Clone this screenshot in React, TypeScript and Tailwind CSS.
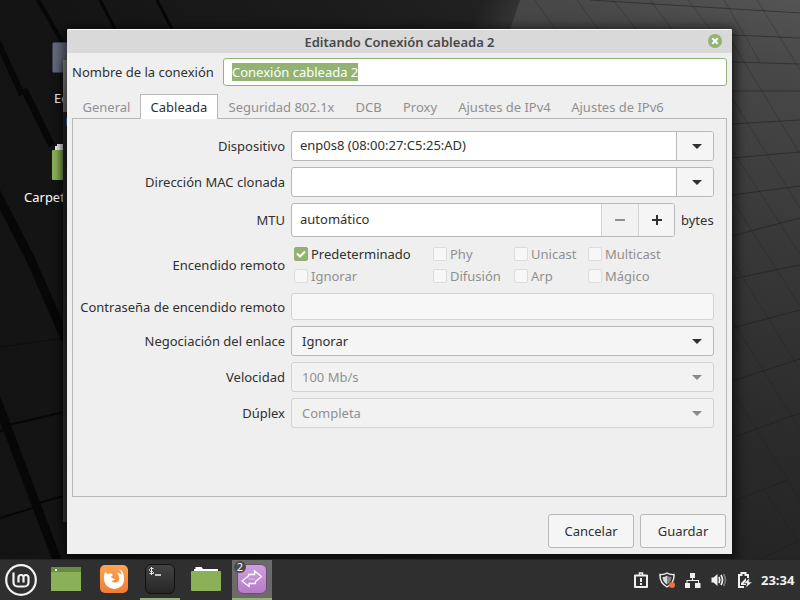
import React from "react";

const TABS = [
  { name: "General", width: "min-w-[67px]" },
  { name: "Cableada", width: "min-w-[78px]" },
  { name: "Seguridad 802.1x", width: "min-w-[127px]" },
  { name: "DCB", width: "min-w-[47px]" },
  { name: "Proxy", width: "min-w-[56px]" },
  { name: "Ajustes de IPv4", width: "min-w-[113px]" },
  { name: "Ajustes de IPv6", width: "min-w-[113px]" },
];

const WAKE = [
  { name: "Predeterminado", on: true },
  { name: "Phy", on: false },
  { name: "Unicast", on: false },
  { name: "Multicast", on: false },
  { name: "Ignorar", on: false },
  { name: "Difusión", on: false },
  { name: "Arp", on: false },
  { name: "Mágico", on: false },
];

function Wallpaper() {
  return (
    <svg className="absolute inset-0 h-full w-full" viewBox="0 0 800 600" preserveAspectRatio="xMidYMid slice" aria-hidden="true">
      <defs>
        <linearGradient id="base" x1="0" y1="0" x2="1" y2="0">
          <stop offset="0" stopColor="#131313" />
          <stop offset="0.3" stopColor="#191919" />
          <stop offset="0.58" stopColor="#202020" />
          <stop offset="1" stopColor="#2a2a2a" />
        </linearGradient>
        <linearGradient id="shine" gradientUnits="userSpaceOnUse" x1="800" y1="0" x2="640" y2="560">
          <stop offset="0" stopColor="#545454" />
          <stop offset="0.12" stopColor="#484848" />
          <stop offset="0.4" stopColor="#393939" />
          <stop offset="0.75" stopColor="#2a2a2a" />
          <stop offset="1" stopColor="#232323" />
        </linearGradient>
        <linearGradient id="edge" gradientUnits="userSpaceOnUse" x1="478" y1="10" x2="506" y2="26">
          <stop offset="0" stopColor="#333333" stopOpacity="0" />
          <stop offset="1" stopColor="#333333" />
        </linearGradient>
      </defs>
      <rect width="800" height="600" fill="url(#base)" />
      <path d="M470 0H560V30H470Z" fill="url(#edge)" />
      <path d="M520 0H800V600H600L510 30Z" fill="url(#shine)" />
      <g stroke="#070707" fill="none">
        <path d="M-2 42L22 95" strokeWidth="6" />
        <path d="M24 89L52 146" strokeWidth="7" />
        <path d="M38 0L68 52" strokeWidth="4" />
        <path d="M100 0L115 29M157 0L172 29" strokeWidth="3" />
        <path d="M-4 192L30 258L66 340" strokeWidth="9" />
        <path d="M-4 398L57 560" strokeWidth="9" />
        <path d="M0 432L8 425L64 412M0 518L36 507M38 503L64 496" strokeWidth="2" />
        <path d="M0 347L64 338" strokeOpacity="0.5" />
      </g>
      <g stroke="#1c1c1c" strokeOpacity="0.5" fill="none">
        <path d="M590 0L800 13M732 35L800 38M732 62L800 64M732 91L800 91M732 124L800 120M732 158L800 152M732 195L800 186M732 236L800 218M732 279L800 265M732 328L800 310M732 381L800 359M732 438L800 413M732 502L787 480M763 558L800 540" />
      </g>
      <g stroke="#1c1c1c" strokeOpacity="0.28" fill="none">
        <path d="M535 0L555 29M577 0L598 29M613 0L636 29M650 0L672 29M688 0L710 29M724 0L760 62M757 0L800 70M732 42L800 154M732 98L800 208M732 150L800 254M732 200L800 306M732 260L800 370M732 320L800 430M732 390L800 500M763 488L797 540" />
      </g>
    </svg>
  );
}

function Arrow({ className }: { className: string }) {
  return (
    <svg className={className} width="10" height="5" viewBox="0 0 10 5" fill="currentColor" aria-hidden="true">
      <path d="M0 0H10L5 5Z" />
    </svg>
  );
}

function Label({ htmlFor, children }: { htmlFor: string; children: React.ReactNode }) {
  return (
    <label htmlFor={htmlFor} className="flex justify-end whitespace-nowrap">
      {children}
    </label>
  );
}

function ComboEntry({ id, value }: { id: string; value: string }) {
  return (
    <div className="flex h-[30px] overflow-hidden rounded-[3px] border border-[#b8b8b8] bg-white">
      <input id={id} defaultValue={value} className="min-w-0 flex-1 px-2 pb-0.5 outline-none" />
      <button type="button" aria-label="Abrir lista" className="flex w-[37px] items-center justify-center border-l border-[#b8b8b8] bg-[#f5f5f5] pl-1">
        <Arrow className="text-[#303030]" />
      </button>
    </div>
  );
}

function Dropdown({ id, value, disabled = false }: { id: string; value: string; disabled?: boolean }) {
  return (
    <div className="relative h-[30px]">
      <select
        id={id}
        disabled={disabled}
        defaultValue={value}
        className="h-full w-full appearance-none rounded-[3px] border border-[#b8b8b8] bg-[#f5f5f5] px-2.5 opacity-100 outline-none disabled:border-[#d3d3d3] disabled:bg-[#f2f2f2] disabled:text-[#909090]"
      >
        <option>{value}</option>
      </select>
      <Arrow className={disabled ? "pointer-events-none absolute top-[13px] right-3 text-[#8a8a8a]" : "pointer-events-none absolute top-[13px] right-3 text-[#303030]"} />
    </div>
  );
}

function Check({ name, on }: { name: string; on: boolean }) {
  return (
    <label className={on ? "flex h-[22px] items-center gap-[3px]" : "flex h-[22px] items-center gap-[3px] text-[#909090]"}>
      <span className="relative flex h-3.5 w-3.5">
        <input
          type="checkbox"
          defaultChecked={on}
          disabled={!on}
          className="h-3.5 w-3.5 appearance-none rounded-[2px] border border-[#dcdcdc] bg-[#f7f7f7] checked:border-[#8fb070] checked:bg-[#92b372]"
        />
        {on && (
          <svg className="pointer-events-none absolute inset-0" width="14" height="14" viewBox="0 0 14 14" fill="none" stroke="#fff" strokeWidth="2" aria-hidden="true">
            <path d="M3 6.5L6 9.5L11 4.5" />
          </svg>
        )}
      </span>
      {name}
    </label>
  );
}

function Dialog() {
  return (
    <section className="relative flex flex-1 flex-col overflow-hidden rounded-t-[2px] bg-[#efefef] shadow-[0_3px_12px_4px_rgba(0,0,0,0.6)]">
      <header className="relative flex h-6 shrink-0 items-center justify-center border-t border-white bg-[#d9d9d9]">
        <h1 className="text-[13px] leading-5 font-semibold text-[#484848]">Editando Conexión cableada 2</h1>
        <button type="button" aria-label="Cerrar" className="absolute top-1 right-2.5 h-3.5 w-3.5 rounded-full bg-[#92b372]">
          <svg width="14" height="14" viewBox="0 0 14 14" stroke="#fff" strokeWidth="2" aria-hidden="true">
            <path d="M4.3 4.3L9.7 9.7M9.7 4.3L4.3 9.7" />
          </svg>
        </button>
      </header>

      <form className="flex flex-1 flex-col px-[5px] pt-[5px] pb-1.5" onSubmit={(e) => e.preventDefault()}>
        <div className="flex items-center">
          <label htmlFor="nombre" className="w-[151px] whitespace-nowrap">
            Nombre de la conexión
          </label>
          <div className="relative h-7 min-w-0 flex-1">
            <input
              id="nombre"
              autoFocus
              defaultValue="Conexión cableada 2"
              onFocus={(e) => e.currentTarget.select()}
              className="h-full w-full rounded-[3px] border border-[#92b372] bg-white px-2 outline-none selection:bg-[#92b372] selection:text-white"
            />
          </div>
        </div>

        <div role="tablist" className="mt-2 flex h-6 pl-px">
          {TABS.map((tab) => (
            <button
              key={tab.name}
              type="button"
              role="tab"
              aria-selected={tab.name === "Cableada"}
              className={`${tab.width} relative -mb-px border border-b-0 border-transparent text-center whitespace-nowrap text-[#909090] aria-selected:z-10 aria-selected:border-[#b8b8b8] aria-selected:bg-white aria-selected:text-[#303030]`}
            >
              {tab.name}
            </button>
          ))}
        </div>

        <div role="tabpanel" className="flex-1 border border-[#b8b8b8] p-3">
          <div className="grid grid-cols-[200px_minmax(0,1fr)] items-center gap-1.5">
            <Label htmlFor="dispositivo">Dispositivo</Label>
            <ComboEntry id="dispositivo" value="enp0s8 (08:00:27:C5:25:AD)" />

            <Label htmlFor="mac">Dirección MAC clonada</Label>
            <ComboEntry id="mac" value="" />

            <Label htmlFor="mtu">MTU</Label>
            <div className="flex items-center gap-1.5">
              <div className="flex h-[34px] min-w-0 flex-1 overflow-hidden rounded-[3px] border border-[#b8b8b8] bg-white">
                <input id="mtu" defaultValue="automático" className="min-w-0 flex-1 px-2 pb-0.5 outline-none" />
                <button type="button" disabled aria-label="Reducir" className="flex w-[37px] items-center justify-center border-l border-[#d3d3d3] bg-[#f2f2f2]">
                  <span className="h-0.5 w-2.5 bg-[#909090]" />
                </button>
                <button type="button" aria-label="Aumentar" className="flex w-9 items-center justify-center border-l border-[#d3d3d3] bg-[#f5f5f5]">
                  <svg width="10" height="10" viewBox="0 0 10 10" stroke="#303030" strokeWidth="2" aria-hidden="true">
                    <path d="M5 0V10M0 5H10" />
                  </svg>
                </button>
              </div>
              <span className="w-[33px] whitespace-nowrap">bytes</span>
            </div>

            <span id="encendido" className="text-right">Encendido remoto</span>
            <div role="group" aria-labelledby="encendido" className="grid grid-cols-[139px_81px_74px_1fr] pl-[3px]">
              {WAKE.map((option) => (
                <Check key={option.name} name={option.name} on={option.on} />
              ))}
            </div>

            <Label htmlFor="clave">Contraseña de encendido remoto</Label>
            <input id="clave" type="password" disabled className="h-[27px] rounded-[3px] border border-[#d3d3d3] bg-[#f7f7f7] px-2" />

            <Label htmlFor="negociacion">Negociación del enlace</Label>
            <Dropdown id="negociacion" value="Ignorar" />

            <Label htmlFor="velocidad">Velocidad</Label>
            <Dropdown id="velocidad" value="100 Mb/s" disabled />

            <Label htmlFor="duplex">Dúplex</Label>
            <Dropdown id="duplex" value="Completa" disabled />
          </div>
        </div>

        <div className="mt-[17px] flex justify-end gap-1.5 pr-px">
          <button type="button" className="h-[34px] w-[86px] rounded-[3px] border border-[#b8b8b8] bg-[#f5f5f5]">Cancelar</button>
          <button type="submit" className="h-[34px] w-[86px] rounded-[3px] border border-[#b8b8b8] bg-[#f5f5f5]">Guardar</button>
        </div>
      </form>
    </section>
  );
}

function TaskButton({ label, state = "idle", children }: { label: string; state?: "idle" | "open" | "active"; children: React.ReactNode }) {
  const look = {
    idle: "border-transparent",
    open: "border-[#92b372]",
    active: "border-[#92b372] bg-[#6b6b6b]",
  }[state];
  return (
    <button type="button" aria-label={label} className={`${look} relative flex w-10 items-center justify-center border-b-2`}>
      {children}
    </button>
  );
}

function Taskbar() {
  return (
    <footer className="relative flex h-[41px] shrink-0 items-stretch border-t border-[#232323] bg-[#2f2f2f] pr-1">
      <button type="button" aria-label="Menú" className="ml-[5px] flex w-8 items-center">
        <svg width="32" height="32" viewBox="0 0 32 32" fill="none" stroke="#f2f2f2" aria-hidden="true">
          <circle cx="16" cy="16" r="14.8" strokeWidth="2.2" />
          <path d="M8.500 8.500V18.500A4 4 0 0 0 12.500 22.500H19.500A4 4 0 0 0 23.500 18.500V13.500A2.500 2.500 0 0 0 18.500 13.500V18.500M18.500 13.500A2.500 2.500 0 0 0 13.500 13.500V18.500" strokeWidth="2.2" />
        </svg>
      </button>
      <div className="ml-[9px] flex gap-1.5">
        <TaskButton label="Mostrar escritorio">
          <svg width="30" height="24" viewBox="0 0 30 24" aria-hidden="true">
            <path d="M0 0H30V24H0Z" fill="#8bb158" />
            <path d="M0 0H30V5H0Z" fill="#688b42" />
            <path d="M4 2H6V4H4Z" fill="#fff" />
          </svg>
        </TaskButton>
        <span className="-mx-[3px] w-0.5" />
        <TaskButton label="Firefox">
          <svg width="28" height="28" viewBox="0 0 28 28" aria-hidden="true">
            <defs>
              <linearGradient id="fox" x1="0" y1="0" x2="0" y2="1">
                <stop offset="0" stopColor="#ffa552" />
                <stop offset="1" stopColor="#f27b35" />
              </linearGradient>
            </defs>
            <rect width="28" height="28" rx="5" fill="url(#fox)" />
            <path d="M5 7L8 9Q10 7.5 12 9L13 10L11 11.5L12 13L15 14Q14 16 11.5 16Q13 18 16 17.5Q20 16.500 19 12Q18.500 9 16.500 7.500Q20 7.500 21.500 10Q21.500 6.500 19 4Q23.500 6 24 12Q25 20 18.500 23Q12 25.500 7 21Q3.500 17.500 4 11Q4.200 8.500 5 7Z" fill="#fff" />
          </svg>
        </TaskButton>
        <TaskButton label="Terminal" state="open">
          <svg width="30" height="30" viewBox="0 0 30 30" aria-hidden="true">
            <defs>
              <linearGradient id="term" x1="0" y1="0" x2="0" y2="1">
                <stop offset="0" stopColor="#444" />
                <stop offset="1" stopColor="#262626" />
              </linearGradient>
            </defs>
            <rect x="0.5" y="0.5" width="29" height="29" rx="5.5" fill="url(#term)" stroke="#111" />
            <path d="M8.500 4.500H5.500L4.500 5.500V6.500L5.500 7.500H7.500L8.500 8.500V9.500H4.500M6.500 3V11" fill="none" stroke="#e8e8e8" />
            <path d="M10 11H16" stroke="#fff" strokeWidth="1.400" />
          </svg>
        </TaskButton>
        <TaskButton label="Archivos">
          <svg width="30" height="25" viewBox="0 0 30 25" aria-hidden="true">
            <path d="M3 5V2H4.500V0H10.500L12 2H27V5Z" fill="#fff" />
            <path d="M0 5Q0 4 1 4H29Q30 4 30 5V23Q30 24 29 24H1Q0 24 0 23Z" fill="#8bb158" />
          </svg>
        </TaskButton>
        <TaskButton label="Conexiones de red" state="active">
          <svg width="30" height="30" viewBox="0 0 30 30" fill="none" aria-hidden="true">
            <defs>
              <linearGradient id="net" x1="0" y1="0" x2="0" y2="1">
                <stop offset="0" stopColor="#cf9fdd" />
                <stop offset="1" stopColor="#b67bc8" />
              </linearGradient>
            </defs>
            <rect x="0.5" y="0.5" width="29" height="29" rx="5.500" fill="url(#net)" stroke="#67506f" />
            <path d="M11.500 10.500H17.500V7L24.500 12.500L18.500 17.500V19.500H12V22.500L5 17L11.500 12Z" stroke="#fff" strokeWidth="1.300" />
            <path d="M11.500 15H18" stroke="#fff" strokeOpacity="0.500" />
          </svg>
          <span className="absolute top-px left-0.5 flex h-3 w-3 items-center justify-center rounded-full bg-[#4a4a4a] text-[11px] leading-3 text-white">2</span>
        </TaskButton>
      </div>

      <div className="ml-auto flex items-center gap-2.5 text-[#f0f0f0]">
        <svg width="16" height="16" viewBox="-1 0 16 16" fill="none" stroke="currentColor" aria-hidden="true">
          <path d="M1 3.500H13V15H1Z" strokeWidth="2" strokeLinejoin="round" />
          <path d="M5.500 3V1H8.500V3" strokeWidth="1.500" />
          <path d="M7 6V10M7 11V13" strokeWidth="2" />
        </svg>
        <svg width="16" height="16" viewBox="0 0 16 16" aria-hidden="true">
          <path d="M8 1Q11 3 15 2.500Q15.500 11 8 15Q0.500 11 1 2.500Q5 3 8 1Z" fill="none" stroke="#f0f0f0" strokeWidth="1.400" />
          <path d="M8 3.500V12.500Q3.500 9.500 3.500 5Q6 5 8 3.500Z" fill="#d8d8d8" />
          <path d="M8 3.500V12.500Q12.500 9.500 12.500 5Q10 5 8 3.500Z" fill="#888" />
          <circle cx="13" cy="13" r="3" fill="#ef7135" />
        </svg>
        <svg width="16" height="16" viewBox="0 0 16 16" fill="currentColor" aria-hidden="true">
          <path d="M5 1H10V6H8V8H14V11H15.500V16H10V11H13V9H2.500V11H5V16H0V11H1.500V8H7V6H5Z" />
        </svg>
        <svg width="16" height="16" viewBox="0 0 16 16" fill="none" stroke="currentColor" aria-hidden="true">
          <path d="M0.500 5.500H2.500L6.500 2V14L2.500 10.500H0.500Z" fill="currentColor" stroke="none" />
          <path d="M8 5Q9.500 8 8 11M10 3Q13 8 10 13" strokeWidth="1.700" />
          <path d="M12.500 2Q16.500 8 12.500 14" stroke="#777" strokeWidth="1.700" />
        </svg>
        <svg width="16" height="16" viewBox="0 0 16 16" fill="none" aria-hidden="true">
          <path d="M7 15H2V3H4.500V1H8.500V3H11V6" stroke="#f0f0f0" strokeWidth="2" />
          <path d="M4 13V11L9 6V13Z" fill="#f0f0f0" />
          <path d="M12.500 5.500L7 11.500H10L8.500 16L15.500 10H12.200Z" fill="#f0f0f0" stroke="#2f2f2f" strokeWidth="0.600" />
        </svg>
        <time className="-ml-0.5 w-[35px] text-[13px] font-bold whitespace-nowrap">23:34</time>
      </div>
    </footer>
  );
}

export default function App() {
  return (
    <div className="relative flex min-h-screen flex-col overflow-hidden bg-[#181818] font-['Noto_Sans','Open_Sans',sans-serif] text-[13px] leading-5 text-[#303030]">
      <Wallpaper />
      <div className="absolute top-[42px] left-[52px] h-[31px] w-12 rounded-[2px] border border-[#3c4152] bg-[#666c7e]" />
      <span className="absolute top-[88px] left-[54px] text-white">Eq</span>
      <svg className="absolute top-36 left-[52px]" width="48" height="36" viewBox="0 0 48 36" aria-hidden="true">
        <path d="M3 6V2H5V0H18V6Z" fill="#f4f4f4" />
        <rect y="6" width="48" height="30" rx="1" fill="#8bb158" />
      </svg>
      <span className="absolute top-[187px] left-6 text-white">Carpet</span>
      <div className="absolute top-[60px] right-[72px] bottom-[78px] left-[63px] bg-linear-to-b from-[#1e1e1e] to-[#3a3a3a] shadow-[0_2px_8px_rgba(0,0,0,0.6)]">
        <div className="h-[52px] bg-linear-to-b from-[#8c8c8c] to-[#6c6c6c]" />
        <div className="mt-1.5 ml-[3px] h-2 w-1 bg-[#3a6ea5]" />
      </div>
      <main className="flex flex-1 flex-col pt-[29px] pr-[68px] pb-[5px] pl-[67px]">
        <Dialog />
      </main>
      <Taskbar />
    </div>
  );
}
